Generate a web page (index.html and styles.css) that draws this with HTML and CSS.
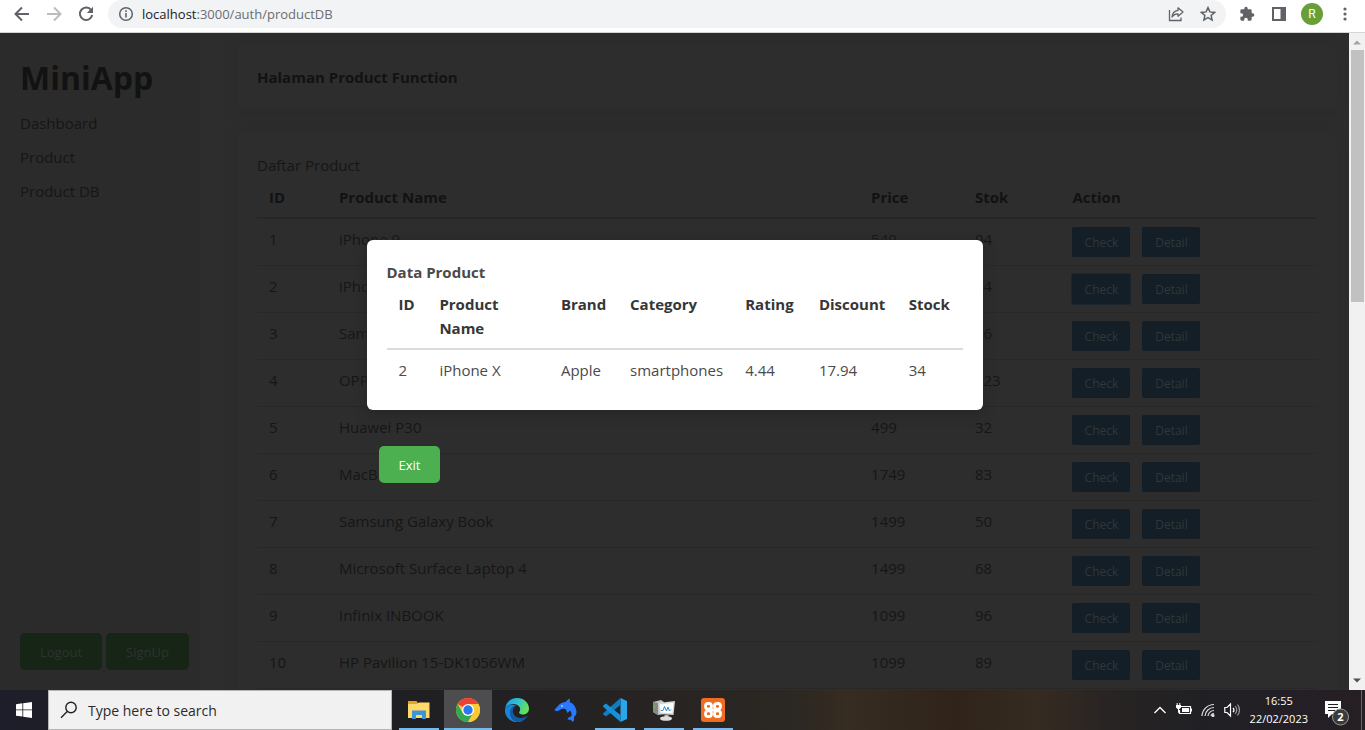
FILE: index.html
```html
<!DOCTYPE html>
<html lang="en">
<head>
<meta charset="utf-8">
<title>MiniApp</title>
<link rel="stylesheet" href="styles.css">
</head>
<body>
<header class="toolbar">
  <button class="tool" aria-label="Back"><svg viewBox="0 0 16 16"><path d="M15 8H2M8 1.5 1.5 8 8 14.5" fill="none" stroke="#5f6368" stroke-width="2"/></svg></button>
  <button class="tool" aria-label="Forward"><svg viewBox="0 0 16 16"><path d="M1 8h13M8 1.5 14.5 8 8 14.5" fill="none" stroke="#babcbe" stroke-width="2"/></svg></button>
  <button class="tool" aria-label="Reload"><svg viewBox="0 0 16 16"><path d="M13.2 4.2A6.2 6.2 0 1 0 14.2 9" fill="none" stroke="#5f6368" stroke-width="2"/><path d="M15 .8V7H8.8z" fill="#5f6368"/></svg></button>
  <div class="address">
    <svg class="info" viewBox="0 0 16 16"><circle cx="8" cy="8" r="6.3" fill="none" stroke="#5f6368" stroke-width="1.5"/><path d="M7.2 7h1.6v4.5H7.200zM7.200 4.300h1.600v1.600H7.200z" fill="#5f6368"/></svg>
    <span class="url"><b>localhost</b>:3000/auth/productDB</span>
    <button class="tool" aria-label="Share"><svg viewBox="0 0 16 16"><path d="M1.500 4v10.500h11.500v-3" fill="none" stroke="#5f6368" stroke-width="1.300"/><path d="M10 1.800 15 6l-5 4.200V7.800C7.500 7.700 5.600 8.600 4 11c.3-3.800 2.500-6 6-6.600z" fill="none" stroke="#5f6368" stroke-width="1.300" stroke-linejoin="round"/></svg></button>
    <button class="tool" aria-label="Bookmark"><svg viewBox="0 0 16 16"><path d="m8 1.600 1.900 4.300 4.700.5-3.500 3.100 1 4.600L8 11.700l-4.100 2.400 1-4.600L1.400 6.400l4.700-.5z" fill="none" stroke="#5f6368" stroke-width="1.500"/></svg></button>
  </div>
  <button class="tool" aria-label="Extensions"><svg viewBox="0 0 24 24"><path d="M20.500 11H19V7a2 2 0 0 0-2-2h-4V3.500a2.500 2.500 0 0 0-5 0V5H4a2 2 0 0 0-2 2v3.800h1.500a2.700 2.700 0 0 1 0 5.400H2V20a2 2 0 0 0 2 2h3.800v-1.500a2.700 2.700 0 0 1 5.400 0V22H17a2 2 0 0 0 2-2v-4h1.500a2.500 2.500 0 0 0 0-5z" fill="#5f6368"/></svg></button>
  <button class="tool" aria-label="Side panel"><svg viewBox="0 0 16 16"><path d="M1 1h14v14H1zM3 3v10h6.500V3z" fill="#5f6368" fill-rule="evenodd"/></svg></button>
  <button class="avatar" aria-label="Profile">R</button>
  <button class="tool" aria-label="Menu"><svg viewBox="0 0 16 16" fill="#5f6368"><circle cx="8" cy="3" r="1.600"/><circle cx="8" cy="8" r="1.600"/><circle cx="8" cy="13" r="1.600"/></svg></button>
</header>

<div class="viewport">
  <div class="page">
    <aside class="sidebar">
      <h1>MiniApp</h1>
      <nav><a href="#">Dashboard</a><a href="#">Product</a><a href="#">Product DB</a></nav>
      <div class="session"><button class="green dim">Logout</button><button class="green dim">SignUp</button></div>
    </aside>
    <main class="main">
      <section class="card"><h2>Halaman Product Function</h2></section>
      <section class="card">
        <p>Daftar Product</p>
        <table class="products">
          <thead><tr><th class="c-id">ID</th><th class="c-name">Product Name</th><th class="c-price">Price</th><th class="c-stock">Stok</th><th>Action</th></tr></thead>
          <tbody>
            <tr><td>1</td><td>iPhone 9</td><td>549</td><td>94</td><td><div class="actions"><button>Check</button><button>Detail</button></div></td></tr>
            <tr><td>2</td><td>iPhone X</td><td>899</td><td>34</td><td><div class="actions"><button class="focused">Check</button><button>Detail</button></div></td></tr>
            <tr><td>3</td><td>Samsung Universe 9</td><td>1249</td><td>36</td><td><div class="actions"><button>Check</button><button>Detail</button></div></td></tr>
            <tr><td>4</td><td>OPPOF19</td><td>280</td><td>123</td><td><div class="actions"><button>Check</button><button>Detail</button></div></td></tr>
            <tr><td>5</td><td>Huawei P30</td><td>499</td><td>32</td><td><div class="actions"><button>Check</button><button>Detail</button></div></td></tr>
            <tr><td>6</td><td>MacBook Pro</td><td>1749</td><td>83</td><td><div class="actions"><button>Check</button><button>Detail</button></div></td></tr>
            <tr><td>7</td><td>Samsung Galaxy Book</td><td>1499</td><td>50</td><td><div class="actions"><button>Check</button><button>Detail</button></div></td></tr>
            <tr><td>8</td><td>Microsoft Surface Laptop 4</td><td>1499</td><td>68</td><td><div class="actions"><button>Check</button><button>Detail</button></div></td></tr>
            <tr><td>9</td><td>Infinix INBOOK</td><td>1099</td><td>96</td><td><div class="actions"><button>Check</button><button>Detail</button></div></td></tr>
            <tr><td>10</td><td>HP Pavilion 15-DK1056WM</td><td>1099</td><td>89</td><td><div class="actions"><button>Check</button><button>Detail</button></div></td></tr>
          </tbody>
        </table>
      </section>
    </main>
    <div class="overlay">
      <div class="dialog" role="dialog" aria-labelledby="dialog-title">
        <div class="panel">
          <h2 id="dialog-title">Data Product</h2>
          <table class="detail">
            <thead><tr><th class="d-id">ID</th><th class="d-name">Product Name</th><th class="d-brand">Brand</th><th class="d-cat">Category</th><th class="d-rate">Rating</th><th class="d-disc">Discount</th><th>Stock</th></tr></thead>
            <tbody><tr><td>2</td><td>iPhone X</td><td>Apple</td><td>smartphones</td><td>4.44</td><td>17.94</td><td>34</td></tr></tbody>
          </table>
        </div>
        <button class="green exit">Exit</button>
      </div>
    </div>
  </div>
  <div class="scrollbar">
    <svg viewBox="0 0 16 16"><path d="M4 11h8L8 7z" fill="#a3a3a3"/></svg>
    <div class="track"><div class="thumb"></div></div>
    <svg viewBox="0 0 16 16"><path d="M4 5h8L8 9z" fill="#505050"/></svg>
  </div>
</div>

<footer class="taskbar">
  <button class="start" aria-label="Start"><svg viewBox="0 0 16 16" fill="#fff"><path d="M0 2.200 6.400 1.300V7.500H0zM7.200 1.200 16 0v7.500H7.200zM0 8.300h6.400v6.300L0 13.700zM7.200 8.300H16V16l-8.800-1.300z"/></svg></button>
  <label class="search"><svg viewBox="0 0 18 18"><circle cx="11" cy="6.500" r="5.200" fill="none" stroke="#222" stroke-width="1.400"/><path d="M7.200 10.500 1 16.700" stroke="#222" stroke-width="1.400"/></svg><input type="text" placeholder="Type here to search" aria-label="Search"></label>
  <div class="apps">
    <button class="app open" aria-label="File Explorer"><svg viewBox="0 0 24 24"><path d="M1 3h8.500l1.500 2h11v15H1z" fill="#e8a51c"/><path d="M1 6h9l2-1.500h10.500V20H1z" fill="#ffd969"/><path d="M5 12.500h14V21h-4v-4H9v4H5z" fill="#3f94d3"/></svg></button>
    <button class="app open active" aria-label="Chrome"><svg viewBox="0 0 24 24"><circle cx="12" cy="12" r="12" fill="#fcc934"/><path d="M12 12 1.600 6A12 12 0 0 1 22.400 6z" fill="#ea4335"/><path d="M1.600 6A12 12 0 0 0 12 24l5.200-9L12 12 6.800 15z" fill="#34a853"/><path d="M12 6h10.400A12 12 0 0 1 12 24l5.200-9z" fill="#fcc934"/><circle cx="12" cy="12" r="6" fill="#fff"/><circle cx="12" cy="12" r="4.700" fill="#2979ee"/></svg></button>
    <button class="app" aria-label="Edge"><svg viewBox="0 0 24 24"><defs><linearGradient id="eg" x1="0" y1="0" x2="1" y2=".4"><stop offset="0" stop-color="#1a9ae0"/><stop offset=".5" stop-color="#2dbfd2"/><stop offset="1" stop-color="#66e05a"/></linearGradient></defs><path d="M0 11C1 4 6 0 12 0c7 0 12 5 12 10.500 0 4-3 6-6.500 6-3 0-4-1.500-3-3C17 9 12 5.500 7.500 6 3.500 6.500 1 8.500 0 11z" fill="url(#eg)"/><path d="M0 11c1.500-4 7-6 11-3.500C6 9 5.500 14.500 8 18s7 6 10 4.500A12 12 0 0 1 0 11z" fill="#1784d8"/><path d="M11 7.500C7 10 7 15 10 18c4 3 9 2.500 13-.5-4 7-12 8.500-16 3.500-4-5-2-13 4-13.500z" fill="#135aa4"/></svg></button>
    <button class="app" aria-label="Database client"><svg viewBox="0 0 24 24"><path d="M.5 12.500C1 10 3 9.500 4 8c1.500-2.300 4-3.600 7.500-4L15 .5c1 1 1.200 2.200.8 3.700C19.500 5.500 22 9 22.500 13.500c.2 2.500-.8 4-2.500 5.500v3.500L18.500 24 17 22l-3.500-.5 1-2 2.500-1c1.200-1.500.8-4-1-6L13.500 15l-1.800-3.800c-2-.6-4-.4-5.700.6l-2 1.500z" fill="#277aff"/><circle cx="8" cy="8" r=".8" fill="#fff"/></svg></button>
    <button class="app open" aria-label="VS Code"><svg viewBox="0 0 24 24"><path d="M17.500 0 24 3v18l-6.500 3z" fill="#2ba5ea"/><path d="M17.500 0v7L3 18.500.5 16.800c-.6-.5-.6-1.200 0-1.700z" fill="#0d7dc6"/><path d="M17.500 24v-7L3 5.500.5 7.200c-.6.500-.6 1.200 0 1.700z" fill="#1592dc"/></svg></button>
    <button class="app open" aria-label="Task Manager"><svg viewBox="0 0 24 24"><path d="m1 4 8-2 3 2v12l-6 1-5-3z" fill="#bfc2c0"/><path d="m1 4 5 1v12l-5-3z" fill="#858987"/><path d="m6 5 17-2-1.500 14L7.500 16z" fill="#d5d8d6"/><path d="m7.800 6.500 13.700-1.800-1.200 10.600-11.300-.8z" fill="#fff"/><path d="M9 12.500h2l1.500-4 2 4.500 1.500-4 1.500 4 1.500-1.500" fill="none" stroke="#318bcf" stroke-width="1"/><path d="M12.500 17h4v3h-4z" fill="#bbb"/><ellipse cx="14" cy="20.500" rx="6" ry="2.300" fill="#ddd"/><path d="M1.500 8H3v2H1.500z" fill="#5fce35"/></svg></button>
    <button class="app open" aria-label="XAMPP"><svg viewBox="0 0 24 24"><rect width="24" height="24" rx="3" fill="#ee6d20"/><g fill="none" stroke="#fff" stroke-width="2.800"><rect x="4.500" y="5.500" width="6" height="5.600" rx="2.600"/><rect x="13.500" y="5.500" width="6" height="5.600" rx="2.600"/><rect x="4.500" y="12.900" width="6" height="5.600" rx="2.600"/><rect x="13.500" y="12.900" width="6" height="5.600" rx="2.600"/></g><path d="M8 12h8" stroke="#fff" stroke-width="3"/></svg></button>
  </div>
  <div class="tray">
    <svg class="ic" viewBox="0 0 16 16"><path d="m2.500 11 5.500-5.500 5.500 5.500" fill="none" stroke="#fff" stroke-width="1.300"/></svg>
    <svg class="ic" viewBox="0 0 16 16"><path d="M5 4.500h9.500v7H3.500V8" fill="none" stroke="#fff" stroke-width="1.200"/><path d="M6 6h7v4H6zM14.500 6.500H16v3h-1.500zM0 3h5v2.500L3.500 7h-2L0 5.500z" fill="#fff"/><path d="M1.200 1v2M3.800 1v2M2.500 7v3.500h1" stroke="#fff" fill="none"/></svg>
    <svg class="ic" viewBox="0 0 16 16" fill="none" stroke="#ddd" stroke-width="1.200"><path d="M2 14A12 12 0 0 1 14 2.500M5 14a9 9 0 0 1 9-8.500M8 14a6 6 0 0 1 6-5.500M11 14a3 3 0 0 1 3-2.500"/><circle cx="13" cy="13.500" r="1" fill="#fff"/></svg>
    <svg class="ic" viewBox="0 0 16 16" fill="none" stroke="#fff" stroke-width="1.200"><path d="M.8 5.500H3L6.500 2v12L3 10.500H.8zM9 5.800q2 2.200 0 4.400"/><path d="M11.200 4q3.200 4 0 8M13.500 2.500q4 5.500 0 11" stroke="#999"/></svg>
    <div class="clock"><span>16:55</span><span>22/02/2023</span></div>
    <button class="notice" aria-label="Notifications"><svg viewBox="0 0 26 26"><path d="M1 1h16v13H8l-4 4v-4H1z" fill="#fff"/><path d="M4 4.500h10M4 7.500h10M4 10.500h7" stroke="#222" stroke-width="1.200"/><circle cx="16.500" cy="17" r="8" fill="#3b3a3b" stroke="#999"/><text x="16.500" y="21" text-anchor="middle" fill="#fff">2</text></svg></button>
    <span class="peek"></span>
  </div>
</footer>
</body>
</html>
```
FILE: styles.css
```css
* { box-sizing: border-box; }
body {
  margin: 0;
  height: 100vh;
  display: grid;
  grid-template-rows: auto minmax(0, 1fr) auto;
  font: 400 15px/24px "Open Sans", "Noto Sans", sans-serif;
  overflow: hidden;
}
button { font: inherit; border: 0; padding: 0; background: none; cursor: pointer; }
svg { display: block; }
h1, h2, p { margin: 0; }
h2 { font-size: 15px; line-height: 24px; font-weight: 700; }

.toolbar {
  display: flex;
  align-items: center;
  gap: 16px;
  height: 33px;
  padding: 0 12px 4px 14px;
  background: #fff;
  border-bottom: 1px solid #d5d5d5;
}
.tool svg { width: 16px; height: 16px; }
.address {
  flex: 1;
  display: flex;
  align-items: center;
  gap: 16px;
  height: 28px;
  padding: 0 10px;
  margin-left: -2px;
  margin-right: -3px;
  border-radius: 14px;
  background: #f1f3f4;
}
.info { width: 16px; height: 16px; }
.url { flex: 1; margin-left: -8px; font-size: 13px; font-weight: 400; color: #6a6e73; }
.url b { font-weight: 400; color: #202124; }
.avatar {
  width: 22px; height: 22px; margin: 0 -2px;
  border-radius: 50%;
  background: #689f38;
  color: #fff;
  font: 400 12px/22px Roboto, sans-serif;
}

.viewport { display: flex; min-height: 0; }
.page { position: relative; flex: 1; display: flex; min-width: 0; overflow: hidden; background: #2d2d2d; color: #161616; }
.sidebar { flex: none; width: 200px; padding: 20px; display: flex; flex-direction: column; background: #2b2b2b; }
.sidebar h1 { font-size: 32px; line-height: 50px; font-weight: 700; margin-bottom: 8px; color: #121212; }
.sidebar nav { display: flex; flex-direction: column; gap: 10px; }
.sidebar a { color: inherit; text-decoration: none; }
.session { display: flex; gap: 4px; margin-top: auto; }
.green {
  padding: 9px 20px 7px;
  border-radius: 5px;
  background: #4caf50;
  color: #fff;
  font-size: 13px;
  line-height: 21px;
  font-weight: 400;
}
.dim { background: #162515; color: #2e332e; }

.main { flex: 1; min-width: 0; display: flex; flex-direction: column; gap: 24px; padding: 12px 12px 0 37px; }
.card { flex: none; padding: 20px; border-radius: 5px; box-shadow: 0 4px 12px #2a2a2a; }
.card h2 { color: #121212; }
table { width: 100%; table-layout: fixed; border-collapse: separate; border-spacing: 0; }
th, td { padding: 8px 12px; text-align: left; vertical-align: top; }
th { font-weight: 700; border-bottom: 2px solid #272727; }
.products th { color: #121212; }
.products td { border-bottom: 1px solid #282828; }
.c-id { width: 6.6%; }
.c-name { width: 50.2%; }
.c-price { width: 9.8%; }
.c-stock { width: 9.2%; }
.actions { display: flex; gap: 12px; }
.actions button { width: 58px; height: 30px; padding-top: 2px; border-radius: 2px; background: #141e26; color: #30373a; font-size: 12px; font-weight: 400; }
.actions .focused { box-shadow: 0 0 0 1px #1b262e; }

.overlay { position: absolute; inset: 0; display: flex; align-items: center; justify-content: center; }
.dialog { width: 616px; max-width: 100%; }
.panel { padding: 20px; border-radius: 6px; background: #fff; color: #363636; box-shadow: 0 4px 12px #262626; }
.panel h2 { color: #4a4a4a; }
.detail th { border-color: #dbdbdb; }
.detail td { color: #4a4a4a; }
.d-id { width: 7.1%; }
.d-name { width: 21.1%; }
.d-brand { width: 12%; }
.d-cat { width: 20%; }
.d-rate { width: 12.8%; }
.d-disc { width: 15.6%; }
.exit { display: block; margin: 36px 12px 0; }

.scrollbar { flex: none; width: 16px; display: flex; flex-direction: column; background: #f1f1f1; }
.scrollbar svg { width: 16px; height: 17px; }
.track { flex: 1; padding: 0 1px 0 2px; }
.thumb { height: 40.5%; background: #c1c1c1; }

.taskbar {
  display: flex;
  height: 40px;
  background: linear-gradient(90deg, #1d1e29 0, #201f22 33%, #292522 52%, #2b2723 58%, #362c21 62%, #30241a 70%, #352b21 76%, #292423 81%, #202024 88%, #261f24 100%);
  color: #fff;
}
.start { width: 48px; display: grid; place-items: center; }
.start svg { width: 16px; height: 16px; }
.search { width: 344px; display: flex; align-items: center; gap: 10px; padding: 0 11px; background: #f1f1f1; border: 1px solid #b5b5b5; }
.search svg { width: 18px; height: 18px; }
.search input { flex: 1; min-width: 0; border: 0; padding: 2px 0 0; background: none; font: 400 14px/20px "Open Sans", sans-serif; }
.search input::placeholder { color: #2b2b2b; opacity: 1; }
.apps { display: flex; gap: 1px; margin-left: 3px; }
.app { width: 48px; height: 40px; display: grid; place-items: center; }
.app svg { width: 24px; height: 24px; }
.open { background: linear-gradient(#76b9ed, #76b9ed) center bottom / 40px 2px no-repeat; }
.active { background-color: #4d4d50; background-size: 48px 2px; }
.tray { display: flex; align-items: center; margin-left: auto; gap: 8px; }
.ic { width: 16px; height: 16px; }
.clock { display: flex; flex-direction: column; align-items: center; margin-left: 2px; font-size: 11px; line-height: 18px; font-weight: 400; }
.notice { margin: 6px 3px 0 8px; }
.notice svg { width: 26px; height: 26px; }
.notice text { font: 700 11px "Open Sans", sans-serif; }
.peek { width: 1px; height: 40px; margin: 0 3px 0 0; background: #666; }
```
